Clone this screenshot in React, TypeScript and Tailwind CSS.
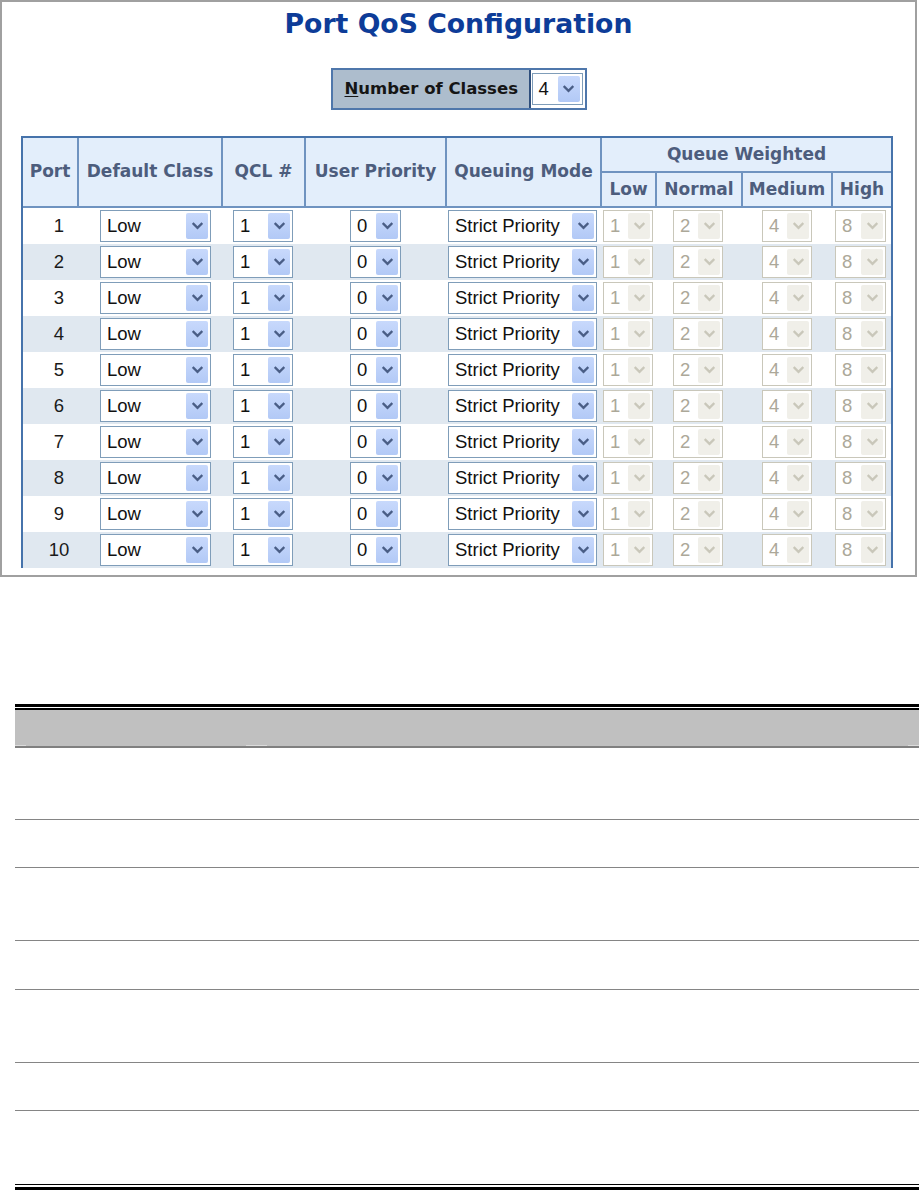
import React from "react";

function Chevron({ disabled }: { disabled?: boolean }) {
  return (
    <svg width="11" height="8" viewBox="0 0 11 8">
      <path
        d="M1.5 1.8 L5.5 5.8 L9.5 1.8"
        fill="none"
        stroke={disabled ? "#c9c7ba" : "#4a5e86"}
        strokeWidth="2.3"
        strokeLinecap="square"
      />
    </svg>
  );
}

function Sel({
  value,
  w,
  disabled,
}: {
  value: string;
  w: string;
  disabled?: boolean;
}) {
  return (
    <div
      className={`flex h-[32px] items-center border bg-white ${w} ${
        disabled ? "border-[#c9c7ba] text-[#aca899]" : "border-[#7f9db9] text-[#111]"
      }`}
    >
      <span className="flex-1 whitespace-nowrap pl-[6px] font-['Liberation_Sans',sans-serif] text-[18.5px] leading-none">
        {value}
      </span>
      <span
        className={`mr-[2px] flex h-[26px] w-[22px] items-center justify-center rounded-[2px] ${
          disabled ? "bg-[#f0efe9]" : "bg-gradient-to-b from-[#c8d9fc] to-[#b2c9f6]"
        }`}
      >
        <Chevron disabled={disabled} />
      </span>
    </div>
  );
}

const hdr =
  "flex items-center justify-center border-[#6f93c0] bg-[#e3eefb] text-[17px] font-bold text-[#4d5d7d] whitespace-nowrap";

export default function App() {
  const rows = Array.from({ length: 10 }, (_, i) => i + 1);
  return (
    <div className="w-[920px] h-[1190px] overflow-hidden bg-white font-['DejaVu_Sans',sans-serif]">
      <div className="h-[577px] w-[917px] border-2 border-[#a0a0a0] bg-white">
        <div className="h-[566px] overflow-hidden">
          <div className="mt-[6px] text-center text-[26.7px] font-bold leading-[32px] text-[#0d3c98]">
            Port QoS Configuration
          </div>
          <div className="mt-[28px] flex justify-center">
            <div className="flex h-[42px] border-2 border-[#4f77ab]">
              <div className="flex w-[198px] items-center border-r-2 border-[#2f4f7c] bg-[#adbdcd] pl-[12px] text-[16.5px] font-bold text-[#151515]">
                <span className="underline underline-offset-2">N</span>umber of Classes
              </div>
              <div className="flex w-[54px] items-center bg-white pl-[1px]">
                <Sel value="4" w="w-[51px]" />
              </div>
            </div>
          </div>
          <div className="ml-[19px] mt-[26px] w-[872px] border-2 border-b-0 border-[#4673ab]">
            <div className="grid grid-cols-[56px_144px_83px_141px_155px_55px_86px_90px_58px] grid-rows-[35px_35px]">
              <div className={`${hdr} row-span-2 border-r-2 border-b-2`}>Port</div>
              <div className={`${hdr} row-span-2 border-r-2 border-b-2`}>Default Class</div>
              <div className={`${hdr} row-span-2 border-r-2 border-b-2`}>QCL #</div>
              <div className={`${hdr} row-span-2 border-r-2 border-b-2`}>User Priority</div>
              <div className={`${hdr} row-span-2 border-r-2 border-b-2`}>Queuing Mode</div>
              <div className={`${hdr} col-span-4 border-b-2`}>Queue Weighted</div>
              <div className={`${hdr} border-r-2 border-b-2`}>Low</div>
              <div className={`${hdr} border-r-2 border-b-2`}>Normal</div>
              <div className={`${hdr} border-r-2 border-b-2`}>Medium</div>
              <div className={`${hdr} border-b-2`}>High</div>
            </div>
            {rows.map((n) => (
              <div
                key={n}
                className={`grid h-[36px] grid-cols-[56px_144px_83px_141px_155px_55px_86px_90px_58px] items-center ${
                  n % 2 === 0 ? "bg-[#e0e8f0]" : "bg-white"
                }`}
              >
                <div className="pl-[16px] text-center font-['Liberation_Sans',sans-serif] text-[18.5px] leading-none text-[#1a1a1a]">
                  {n}
                </div>
                <div className="pl-[21px]">
                  <Sel value="Low" w="w-[111px]" />
                </div>
                <div className="pl-[10px]">
                  <Sel value="1" w="w-[60px]" />
                </div>
                <div className="pl-[44px]">
                  <Sel value="0" w="w-[51px]" />
                </div>
                <div className="pl-[1px]">
                  <Sel value="Strict Priority" w="w-[149px]" />
                </div>
                <div className="pl-[1px]">
                  <Sel value="1" w="w-[50px]" disabled />
                </div>
                <div className="pl-[16px]">
                  <Sel value="2" w="w-[50px]" disabled />
                </div>
                <div className="pl-[19px]">
                  <Sel value="4" w="w-[50px]" disabled />
                </div>
                <div className="pl-[2px]">
                  <Sel value="8" w="w-[51px]" disabled />
                </div>
              </div>
            ))}
          </div>
        </div>
      </div>

      <div className="ml-[15px] mt-[127px] w-[904px]">
        <div className="h-[3px] bg-black" />
        <div className="h-[1px] bg-white" />
        <div className="h-[2px] bg-black" />
        <div className="h-[35px] bg-[#c0c0c0]" />
        <div className="flex h-[1px] bg-[#c0c0c0]">
          <div className="w-[11px] bg-[#dcdcdc]" />
          <div className="w-[220px]" />
          <div className="w-[21px] bg-[#dcdcdc]" />
          <div className="flex-1" />
          <div className="w-[11px] bg-[#dcdcdc]" />
        </div>
        <div className="h-[2px] bg-[#808080]" />
        <div className="h-[72px] border-b border-[#858585]" />
        <div className="h-[48px] border-b border-[#858585]" />
        <div className="h-[73px] border-b border-[#858585]" />
        <div className="h-[49px] border-b border-[#858585]" />
        <div className="h-[73px] border-b border-[#858585]" />
        <div className="h-[48px] border-b border-[#858585]" />
        <div className="h-[73px]" />
        <div className="h-[1px] bg-black" />
        <div className="h-[2px] bg-white" />
        <div className="h-[4px] bg-black" />
      </div>
    </div>
  );
}
